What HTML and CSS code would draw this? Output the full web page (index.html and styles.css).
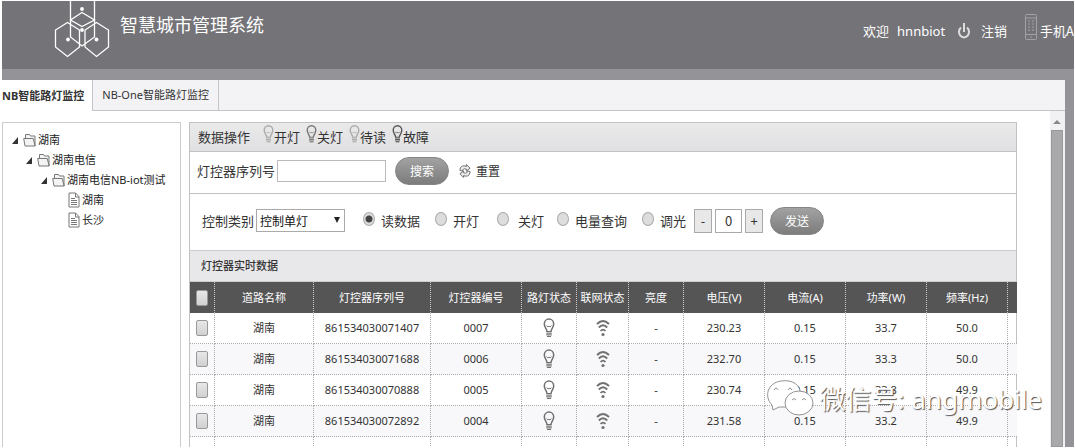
FILE: index.html
```html
<!DOCTYPE html>
<html lang="zh-CN">
<head>
<meta charset="utf-8">
<title>智慧城市管理系统</title>
<link rel="stylesheet" href="styles.css">
</head>
<body>
<svg class="defs" aria-hidden="true">
  <symbol id="bulb" viewBox="0 0 12 20">
    <path d="M4 13.500C4 11 1.300 9.500 1.300 6A4.700 5 0 0 1 10.700 6C10.700 9.500 8 11 8 13.500" fill="none" stroke="currentColor" stroke-width="1.500"/>
    <path d="M3.500 7.500 5 9 6 8 7 9 8.500 7.500" fill="none" stroke="currentColor" stroke-width=".9"/>
    <path d="M3.300 13.500h5.400v4l-1 1.500h-3.400l-1-1.500z" fill="currentColor" fill-opacity=".45"/>
    <path d="M3.300 13.500h5.400M3.300 16h5.400M4 18.500h4" stroke="currentColor" stroke-width="1"/>
  </symbol>
  <symbol id="wifi" viewBox="0 0 14 18">
    <path d="M1 5Q7-1 13 5M2.800 8.500Q7 4 11.200 8.500M4.600 12Q7 9.200 9.400 12" fill="none" stroke="currentColor" stroke-width="1.900"/>
    <circle cx="7" cy="15.500" r="1.600" fill="currentColor"/>
  </symbol>
  <symbol id="folder" viewBox="0 0 14 14">
    <path d="M2.500 5V1.500h4l1 1.500h4.500v10M.7 5.500h9.500l2 7.500H2Z" fill="#f4f4f4" stroke="#777"/>
  </symbol>
  <symbol id="doc" viewBox="0 0 12 16">
    <path d="M1 1h6.500L11 4.500V15H1ZM7.500 1v4H11" fill="#fff" stroke="#777"/>
    <path d="M3 6.500h4M3 8.500h6M3 10.500h6M3 12.500h6" stroke="#777"/>
  </symbol>
</svg>
<div class="app">
  <header class="header">
    <svg class="logo" viewBox="0 0 56 57" fill="none" stroke="#fff" stroke-width="1.300">
      <path d="M16.500-4V36L28 45 40.500 36V-4M28 11.500 40.500 19 28 25.500 16.500 19ZM13.500 21.500 25.500 29V46L13.500 55.500 1.500 46V29ZM42.500 21.500 54.500 29V46L42.500 55.500 31 46V29Z"/>
      <g fill="#fff" stroke="none"><circle cx="28" cy="8" r="1.900"/><circle cx="28" cy="29" r="1.900"/><circle cx="14" cy="38.500" r="1.900"/><circle cx="42.500" cy="38.500" r="1.900"/></g>
    </svg>
    <h1 class="title">智慧城市管理系统</h1>
    <nav class="user">
      <span>欢迎</span>
      <span class="name">hnnbiot</span>
      <svg class="power" viewBox="0 0 14 18" fill="none" stroke="#ddd" stroke-width="2"><path d="M4 5.500A5 5.500 0 1 0 10 5.500M7 1v9"/></svg>
      <a class="logout" href="#">注销</a>
      <a class="phone" href="#"><svg viewBox="0 0 12 26" fill="none" stroke="#a2a2a6"><rect x=".5" y=".5" width="11" height="25" rx="1"/><path d="M1 4h10M1 20.500h10M3 7h2M7 7h2M3 10h2M7 10h2M3 13h2M7 13h2M3 16h2M7 16h2M5 23h2"/></svg>手机A</a>
    </nav>
  </header>
  <div class="workspace">
    <div class="tabs">
      <button class="tab active">NB智能路灯监控</button>
      <button class="tab">NB-One智能路灯监控</button>
    </div>
    <div class="content">
      <aside class="tree">
        <div class="node"><i class="caret"></i><svg class="folder"><use href="#folder"/></svg>湖南</div>
        <div class="node lv1"><i class="caret"></i><svg class="folder"><use href="#folder"/></svg>湖南电信</div>
        <div class="node lv2"><i class="caret"></i><svg class="folder"><use href="#folder"/></svg>湖南电信NB-iot测试</div>
        <div class="node leaf"><svg class="doc"><use href="#doc"/></svg>湖南</div>
        <div class="node leaf"><svg class="doc"><use href="#doc"/></svg>长沙</div>
      </aside>
      <main class="main">
        <div class="bar">
          <span class="bar-title">数据操作</span>
          <span class="state"><svg class="on"><use href="#bulb"/></svg>开灯</span>
          <span class="state"><svg class="off"><use href="#bulb"/></svg>关灯</span>
          <span class="state"><svg class="wait"><use href="#bulb"/></svg>待读</span>
          <span class="state"><svg class="fault"><use href="#bulb"/></svg>故障</span>
        </div>
        <form class="search">
          <label for="serial">灯控器序列号</label>
          <input class="serial" id="serial" type="text">
          <button class="pill" type="button">搜索</button>
          <button class="reset" type="button"><svg viewBox="0 0 13 16" fill="#eee" stroke="#666"><path d="M1 7.500C1 3 4 1.500 8 3V1l4 4-4 3V6C5 5 4 6 4 8ZM12 8.500C12 13 9 14.500 5 13v2L1 11l4-3v2c3 1 4 0 4-2Z"/></svg>重置</button>
        </form>
        <form class="control">
          <label for="kind">控制类别</label>
          <div class="select"><select id="kind"><option>控制单灯</option></select></div>
          <label class="opt read"><input type="radio" name="op" checked>读数据</label>
          <label class="opt"><input type="radio" name="op">开灯</label>
          <label class="opt close"><input type="radio" name="op">关灯</label>
          <label class="opt power-use"><input type="radio" name="op">电量查询</label>
          <label class="opt"><input type="radio" name="op">调光</label>
          <div class="stepper">
            <button type="button">-</button>
            <input type="text" value="0" aria-label="调光">
            <button type="button">+</button>
          </div>
          <button class="pill" type="button">发送</button>
        </form>
        <h2 class="section">灯控器实时数据</h2>
        <table class="grid">
          <colgroup><col class="c-check"><col class="c-road"><col class="c-serial"><col class="c-no"><col class="c-lamp"><col class="c-net"><col class="c-lamp"><col class="c-num"><col class="c-num"><col class="c-num"><col class="c-num"><col class="c-end"></colgroup>
          <thead>
            <tr><th><input type="checkbox" aria-label="全选"></th><th>道路名称</th><th>灯控器序列号</th><th>灯控器编号</th><th>路灯状态</th><th>联网状态</th><th>亮度</th><th>电压(V)</th><th>电流(A)</th><th>功率(W)</th><th>频率(Hz)</th><th></th></tr>
          </thead>
          <tbody>
            <tr><td><input type="checkbox" aria-label="0007"></td><td>湖南</td><td>861534030071407</td><td>0007</td><td><svg class="lamp"><use href="#bulb"/></svg></td><td><svg class="wifi"><use href="#wifi"/></svg></td><td>-</td><td>230.23</td><td>0.15</td><td>33.7</td><td>50.0</td><td></td></tr>
            <tr><td><input type="checkbox" aria-label="0006"></td><td>湖南</td><td>861534030071688</td><td>0006</td><td><svg class="lamp"><use href="#bulb"/></svg></td><td><svg class="wifi"><use href="#wifi"/></svg></td><td>-</td><td>232.70</td><td>0.15</td><td>33.3</td><td>50.0</td><td></td></tr>
            <tr><td><input type="checkbox" aria-label="0005"></td><td>湖南</td><td>861534030070888</td><td>0005</td><td><svg class="lamp"><use href="#bulb"/></svg></td><td><svg class="wifi"><use href="#wifi"/></svg></td><td>-</td><td>230.74</td><td>0.15</td><td>33.8</td><td>49.9</td><td></td></tr>
            <tr><td><input type="checkbox" aria-label="0004"></td><td>湖南</td><td>861534030072892</td><td>0004</td><td><svg class="lamp"><use href="#bulb"/></svg></td><td><svg class="wifi"><use href="#wifi"/></svg></td><td>-</td><td>231.58</td><td>0.15</td><td>33.2</td><td>49.9</td><td></td></tr>
            <tr><td></td><td></td><td></td><td></td><td></td><td></td><td></td><td></td><td></td><td></td><td></td><td></td></tr>
          </tbody>
        </table>
      </main>
      <div class="scroll"><i class="up"></i><div class="thumb"></div></div>
    </div>
  </div>
</div>
<div class="watermark">
  <svg viewBox="0 0 48 40" fill="#fff" stroke="#777" stroke-width=".8">
    <path d="M5 26C-3 18 0 4 14 2C26 0 34 7 33 14L20 28H12L6 31Z"/>
    <ellipse cx="32" cy="24" rx="14" ry="12"/>
    <path d="M7 11q2-4 4 0M21 11q2-4 4 0M25 21q2-3 4 0M35 21q2-3 4 0" fill="none"/>
  </svg>
  <span>微信号: angmobile</span>
</div>
</body>
</html>
```
FILE: styles.css
```css
* { box-sizing: border-box; }
body {
  margin: 0;
  height: 100vh;
  overflow: hidden;
  position: relative;
  background: #fff;
  color: #333;
  font: 13px/20px "Noto Sans CJK SC", sans-serif;
}
button, input, select { font: inherit; color: inherit; margin: 0; padding: 0; }
a { color: inherit; text-decoration: none; }
svg { flex: none; display: block; }
.defs { display: none; }

.app {
  height: calc(100vh - 2px);
  margin: 1px 1px 0 2px;
  background: #949398;
  display: flex;
  flex-direction: column;
}
.header {
  flex: none;
  height: 68px;
  background: #747378;
  color: #fff;
  display: flex;
  align-items: flex-start;
  overflow: hidden;
}
.logo { width: 56px; height: 57px; margin-left: 52px; }
.title {
  margin: 9px 0 0 10px;
  font-size: 18px;
  line-height: 28px;
  font-weight: 400;
}
.user {
  margin: 12px 0 0 auto;
  display: flex;
  align-items: center;
  height: 36px;
  white-space: nowrap;
}
.name { margin-left: 8px; font: 13px/20px "Noto Sans", sans-serif; }
.power { width: 14px; height: 18px; margin: 0 10px 0 12px; }
.phone { display: flex; align-items: center; margin-left: 18px; }
.phone svg { width: 12px; height: 26px; margin: 0 3px 8px 0; }

.workspace {
  flex: 1;
  min-height: 0;
  margin: 11px 9px 0 0;
  background: #fff;
  display: flex;
  flex-direction: column;
}
.tabs { flex: none; display: flex; height: 31px; background: #f3f3f6; }
.tabs::after { content: ""; flex: 1; border-bottom: 1px solid #c4c4c8; }
.tab {
  border: 0;
  border-right: 1px solid #c4c4c8;
  border-bottom: 1px solid #c4c4c8;
  background: #f3f3f6;
  padding: 0 9px;
  font-size: 11px;
  font-family: "Noto Sans", "Noto Sans CJK SC", sans-serif;
}
.tab.active { background: #fff; border-bottom: 0; font-weight: 700; padding: 0 8px 0 0; }

.content { flex: 1; min-height: 0; display: flex; overflow: hidden; }
.tree {
  flex: none;
  width: 179px;
  margin: 11px 8px 0 0;
  border: 1px solid #ccc;
  border-bottom: 0;
  padding: 7px 0 0 8px;
  font-size: 11px;
  font-family: "Noto Sans", "Noto Sans CJK SC", sans-serif;
}
.node { display: flex; align-items: center; height: 20px; gap: 1px; white-space: nowrap; color: #222; }
.lv1 { padding-left: 14px; }
.lv2 { padding-left: 29px; }
.leaf { padding-left: 57px; gap: 2px; }
.caret {
  border-left: 6px solid transparent;
  border-bottom: 7px solid #333;
  margin: 0 4px 0 1px;
}
.folder { width: 14px; height: 14px; }
.doc { width: 12px; height: 16px; }

.main { flex: 1; min-width: 0; margin: 11px 33px 0 0; border: 1px solid #c2c2c2; border-bottom: 0; }
.bar {
  display: flex;
  align-items: center;
  height: 29px;
  padding-left: 8px;
  border-bottom: 1px solid #c2c2c2;
  background: linear-gradient(#eaeaeb, #e0e0e2);
}
.bar-title { margin-right: 13px; }
.state { display: flex; align-items: center; margin-right: 6px; }
.state svg { width: 11px; height: 20px; margin-bottom: 6px; }
.on, .wait { color: #aaa; }
.off { color: #777; }
.fault { color: #555; }

.search { display: flex; align-items: center; height: 42px; padding: 0 0 3px 7px; border-bottom: 1px solid #c2c2c2; }
.serial { width: 109px; height: 22px; margin: 0 9px 0 2px; border: 1px solid #bbb; background: #fff; }
.pill {
  width: 54px;
  height: 28px;
  border: 1px solid #858585;
  border-radius: 14px;
  background: linear-gradient(#a2a2a2, #7c7c7c);
  color: #fff;
  font-size: 12px;
  line-height: 20px;
}
.reset { display: flex; align-items: center; gap: 5px; margin-left: 10px; border: 0; background: none; font-size: 12px; }
.reset svg { width: 12px; height: 16px; }

.control { display: flex; align-items: center; height: 56px; padding: 0 0 3px 12px; white-space: nowrap; }
.select { position: relative; margin-left: 2px; }
.select select {
  appearance: none;
  width: 89px;
  height: 23px;
  padding-left: 3px;
  border: 1px solid #aaa;
  background: #fff;
  font-size: 12px;
  color: #111;
}
.select::after {
  content: "";
  position: absolute;
  right: 5px;
  top: 8px;
  border: 3px solid transparent;
  border-top: 6px solid #222;
  border-bottom: 0;
  pointer-events: none;
}
.opt { display: flex; align-items: center; margin-left: 15px; }
.opt.read, .opt.close { margin-left: 18px; }
.opt.power-use { margin-left: 13px; }
.opt input {
  appearance: none;
  width: 12px;
  height: 14px;
  margin: 0 6px 4px 0;
  border: 1px solid #aaa;
  border-radius: 50%;
  background: #ddd;
}
.opt.close input { margin-right: 9px; }
.opt input:checked { background: radial-gradient(circle, #444 0 3px, #ddd 4px); }
.stepper { display: flex; gap: 3px; margin: 0 7px 0 8px; }
.stepper button, .stepper input { width: 18px; height: 24px; border: 1px solid #aaa; background: #e8e8e8; text-align: center; }
.stepper input { width: 27px; background: #fff; }

.section {
  margin: 0;
  height: 32px;
  padding: 0 11px;
  border-top: 1px solid #ccc;
  border-bottom: 1px solid #ccc;
  background: #e8e8ea;
  font-size: 11px;
  line-height: 29px;
  font-weight: 500;
}
.grid { width: 100%; table-layout: fixed; border-collapse: separate; border-spacing: 0; font: 11px/20px "Noto Sans", "Noto Sans CJK SC", sans-serif; }
.grid th, .grid td { height: 31px; padding: 0; text-align: center; white-space: nowrap; border-right: 1px dotted #aaa; border-bottom: 1px dotted #aaa; }
.grid th { background: #555556; color: #fff; font-weight: 400; border-bottom: 0; border-right-color: #ccc; }
.grid th:last-child, .grid td:last-child { border-right: 0; }
.grid tr:nth-child(even) td { background: #f8f8fa; }
.grid svg { margin: 0 auto; color: #707070; }
.lamp { width: 12px; height: 20px; }
.wifi { width: 14px; height: 18px; }
.grid input {
  appearance: none;
  display: block;
  width: 12px;
  height: 16px;
  margin: 0 auto;
  border: 1px solid #999;
  border-radius: 2px;
  background: linear-gradient(#e8e8e8, #d0d0d0);
}
.c-check { width: 25px; }
.c-road { width: 99px; }
.c-serial { width: 117px; }
.c-no { width: 91px; }
.c-lamp { width: 55px; }
.c-net { width: 52px; }
.c-num { width: 81px; }
.c-end { width: 9px; }

.scroll { flex: none; width: 15px; padding-right: 2px; background: #f1f1f3; display: flex; flex-direction: column; align-items: center; }
.up { border: 4px solid transparent; border-top: 0; border-bottom: 4px solid #888; margin: 9px 0 6px; }
.thumb { flex: 1; align-self: stretch; margin-left: 1px; background: #a9a9ac; border: 1px solid #98989b; }

.watermark {
  position: absolute;
  right: 33px;
  top: 379px;
  display: flex;
  align-items: center;
  gap: 5px;
  color: #fff;
  font: 26px/40px "Noto Sans", "Noto Sans CJK SC", sans-serif;
  text-shadow: 1px 1px 1px #555;
  white-space: nowrap;
}
.watermark svg { width: 48px; height: 40px; }
```
